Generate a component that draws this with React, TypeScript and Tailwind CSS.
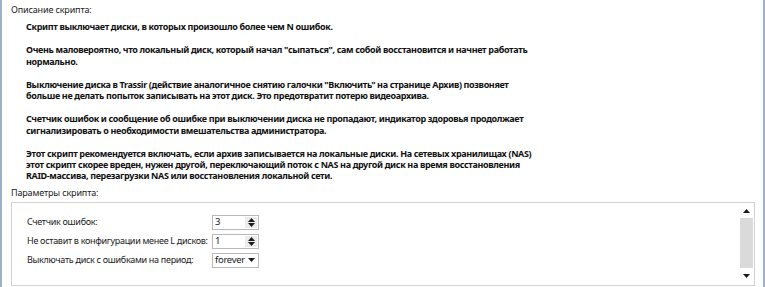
import React from "react";

const paragraphs: string[][] = [
  ["Скрипт выключает диски, в которых произошло более чем N ошибок."],
  [
    "Очень маловероятно, что локальный диск, который начал \"сыпаться\", сам собой восстановится и начнет работать",
    "нормально.",
  ],
  [
    "Выключение диска в Trassir (действие аналогичное снятию галочки \"Включить\" на странице Архив) позвоняет",
    "больше не делать попыток записывать на этот диск. Это предотвратит потерю видеоархива.",
  ],
  [
    "Счетчик ошибок и сообщение об ошибке при выключении диска не пропадают, индикатор здоровья продолжает",
    "сигнализировать о необходимости вмешательства администратора.",
  ],
  [
    "Этот скрипт рекомендуется включать, если архив записывается на локальные диски. На сетевых хранилищах (NAS)",
    "этот скрипт скорее вреден, нужен другой, переключающий поток с NAS на другой диск на время восстановления",
    "RAID-массива, перезагрузки NAS или восстановления локальной сети.",
  ],
];

const Up = () => (
  <svg width="7" height="4" viewBox="0 0 7 4">
    <path d="M0 4 L3.5 0 L7 4 Z" fill="#1a1a1a" />
  </svg>
);

const Down = () => (
  <svg width="7" height="4" viewBox="0 0 7 4">
    <path d="M0 0 L7 0 L3.5 4 Z" fill="#1a1a1a" />
  </svg>
);

const SpinBox = ({ value }: { value: string }) => (
  <div className="flex h-[15px] w-[47px] items-stretch border border-[#b9b9b9] bg-white">
    <div className="flex flex-1 items-center pl-[2px] text-[9.5px] leading-none">{value}</div>
    <div className="my-[1px] mr-[1px] flex w-[12px] flex-col items-center justify-center gap-[1px] bg-[#ebebeb]">
      <Up />
      <Down />
    </div>
  </div>
);

const ComboBox = ({ value }: { value: string }) => (
  <div className="flex h-[15px] w-[47px] items-center justify-between border border-[#b9b9b9] bg-white pl-[2px] pr-[3px]">
    <span className="text-[9.5px] leading-none">{value}</span>
    <Down />
  </div>
);

export default function App() {
  return (
    <div className="h-[287px] w-[765px] overflow-hidden border-x-2 border-[#9fb0cb] bg-white pl-[9px] pr-[8px] pt-[4px] font-['Noto_Sans',sans-serif] text-[#1a1a1a]">
      <div className="h-[12px] whitespace-nowrap text-[9px] leading-[12px] tracking-[-0.15px]">Описание скрипта:</div>

      <div className="mt-[5px] flex flex-col gap-[12px] pl-[15px] text-[9px] font-bold leading-[11.25px] tracking-[-0.35px] text-[#111]">
        {paragraphs.map((lines, i) => (
          <div key={i}>
            {lines.map((l, j) => (
              <div key={j} className="whitespace-nowrap">
                {l}
              </div>
            ))}
          </div>
        ))}
      </div>

      <div className="mt-[5px] h-[12px] whitespace-nowrap text-[9px] leading-[12px] tracking-[-0.15px]">Параметры скрипта:</div>

      <div className="mt-[3px] flex h-[84px] border border-[#d2d2d2]">
        <div className="flex flex-1 flex-col gap-[4px] pl-[15px] pt-[12px] text-[9px] tracking-[-0.3px]">
          <div className="flex h-[15px] items-center">
            <div className="w-[185px] whitespace-nowrap">Счетчик ошибок:</div>
            <SpinBox value="3" />
          </div>
          <div className="flex h-[15px] items-center">
            <div className="w-[185px] whitespace-nowrap">Не оставит в конфигурации менее L дисков:</div>
            <SpinBox value="1" />
          </div>
          <div className="flex h-[15px] items-center">
            <div className="w-[185px] whitespace-nowrap">Выключать диск с ошибками на период:</div>
            <ComboBox value="forever" />
          </div>
        </div>

        <div className="my-[1px] mr-[1px] flex w-[13px] flex-col">
          <div className="flex h-[14px] items-center justify-center">
            <Up />
          </div>
          <div className="flex-1 bg-[#dadada]" />
          <div className="flex h-[16px] items-center justify-center">
            <Down />
          </div>
        </div>
      </div>
    </div>
  );
}
